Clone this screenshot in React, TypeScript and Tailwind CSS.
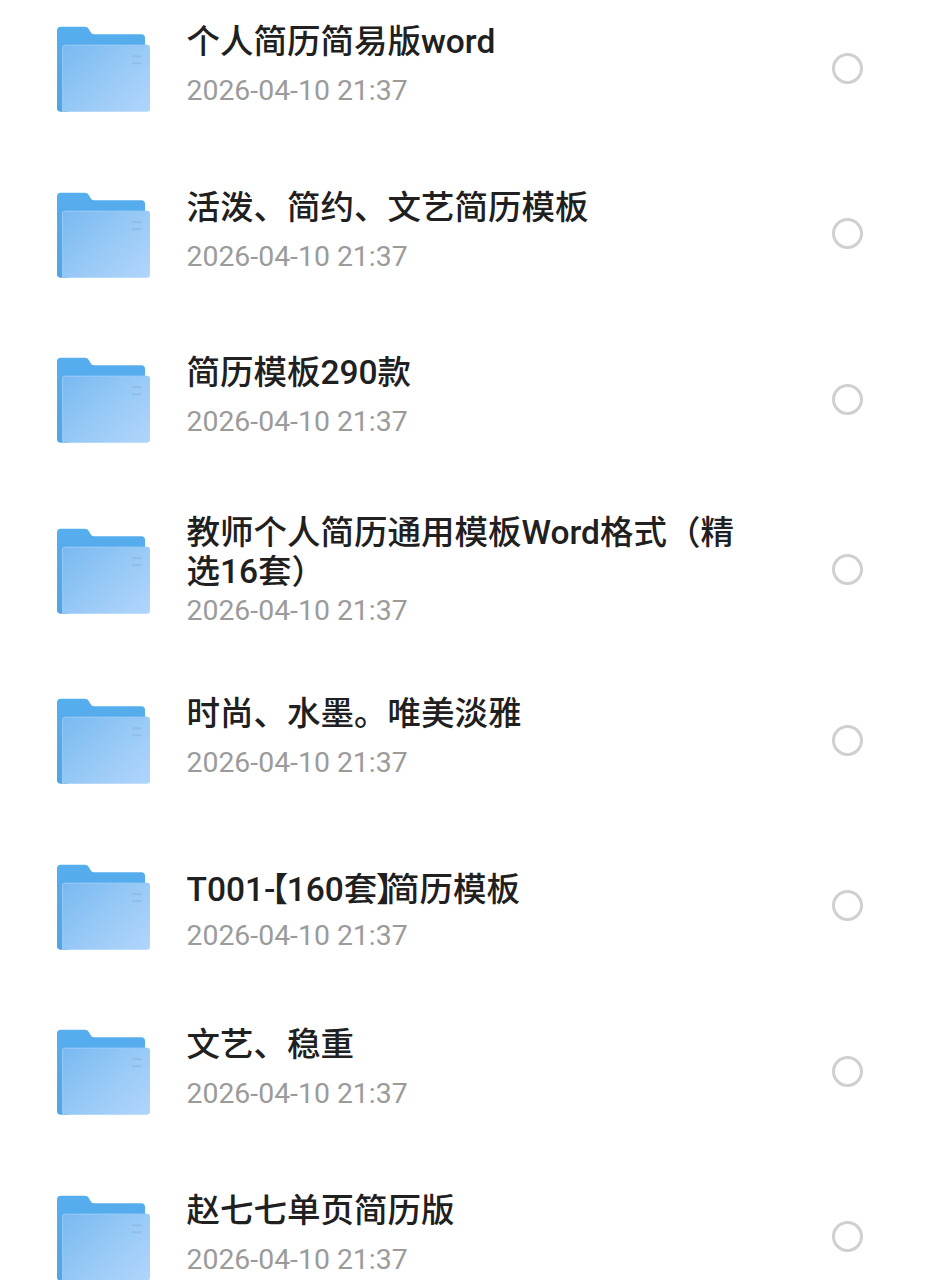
import React, { useState } from "react";
import clsx from "clsx";

type Folder = {
    name: React.ReactNode;
    date: string;
    // rows are a little taller when the name wraps onto a second line
    rowClass: string;
    nameClass: string;
};

const SINGLE = "h-[165.5px] pb-[6px]";
const SINGLE_NAME = "mb-[13px]";

const folders: Folder[] = [
    { name: "个人简历简易版word", date: "2026-04-10 21:37", rowClass: SINGLE, nameClass: SINGLE_NAME },
    { name: "活泼、简约、文艺简历模板", date: "2026-04-10 21:37", rowClass: SINGLE, nameClass: SINGLE_NAME },
    { name: "简历模板290款", date: "2026-04-10 21:37", rowClass: SINGLE, nameClass: SINGLE_NAME },
    {
        name: "教师个人简历通用模板Word格式（精选16套）",
        date: "2026-04-10 21:37",
        rowClass: "h-[175.5px] pt-[2px]",
        nameClass: "mb-[3.5px]",
    },
    { name: "时尚、水墨。唯美淡雅", date: "2026-04-10 21:37", rowClass: SINGLE, nameClass: SINGLE_NAME },
    {
        // half-width brackets, pulled in tight against their neighbours
        name: (
            <>
                T001<span className="tracking-[-4px]">-</span>
                <span className="tracking-[-1.5px]">【</span>
                160<span className="tracking-[-1.5px]">套</span>
                <span className="tracking-[-6.5px]">】</span>
                简历模板
            </>
        ),
        date: "2026-04-10 21:37",
        rowClass: "h-[165.5px] pt-[12px]",
        nameClass: "mb-[10.5px] [font-feature-settings:'halt']",
    },
    { name: "文艺、稳重", date: "2026-04-10 21:37", rowClass: SINGLE, nameClass: SINGLE_NAME },
    { name: "赵七七单页简历版", date: "2026-04-10 21:37", rowClass: SINGLE, nameClass: SINGLE_NAME },
];

const FolderIcon = () => (
    <svg width="94" height="86" viewBox="-0.5 -0.25 94 86" className="block">
        <defs>
            <linearGradient id="folderBack" x1="0" y1="0" x2="0" y2="1">
                <stop offset="0" stopColor="#56aeef" />
                <stop offset="1" stopColor="#53a4e2" />
            </linearGradient>
            <linearGradient id="folderFront" x1="0" y1="0.1" x2="1" y2="0.9">
                <stop offset="0" stopColor="#7bbaf1" />
                <stop offset="0.5" stopColor="#97c9f6" />
                <stop offset="1" stopColor="#afd4fb" />
            </linearGradient>
        </defs>
        <path
            d="M4 0.5H28C30 0.5 31.3 1.2 32.4 3L34.6 6.6C35.3 7.7 36 8 37.5 8H85C87 8 88.5 9.5 88.5 11.5V82H4C2 82 0.5 84 0.5 82V4C0.5 2 2 0.5 4 0.5Z"
            fill="url(#folderBack)"
        />
        <path d="M0.5 78H12V85.5H4C2 85.5 0.5 84 0.5 82Z" fill="#53a4e2" />
        <path
            d="M8 18.5H90.5C92.3 18.5 93.5 19.7 93.5 21.5V82.5C93.5 84.3 92.3 85.5 90.5 85.5H5.5V21C5.5 19.5 6.5 18.5 8 18.5Z"
            fill="url(#folderFront)"
        />
        <path d="M6 85V21.5C6 19.8 6.8 19 8.5 19H90" fill="none" stroke="#96caf6" strokeWidth="1" />
        <path d="M75.5 30H85M75.5 37H85" stroke="#8fbdec" strokeWidth="2" />
    </svg>
);

const FolderRow = ({
    folder,
    checked,
    onToggle,
}: {
    folder: Folder;
    checked: boolean;
    onToggle: () => void;
}) => (
    <li className="flex items-center pl-[56px] pr-[67px]">
        <div className="pt-[2px]">
            <FolderIcon />
        </div>
        <div className={clsx("ml-[36.5px] w-[564px] flex flex-col justify-center", folder.rowClass)}>
            <div
                className={clsx(
                    "text-[33.5px] leading-[39px] font-medium text-[#202020]",
                    folder.nameClass
                )}
            >
                {folder.name}
            </div>
            <div className="text-[28.4px] leading-[34px] text-[#9b9b9b]">{folder.date}</div>
        </div>
        <button
            aria-label="select"
            onClick={onToggle}
            className={clsx(
                "ml-auto size-[31px] rounded-full border-[3px] border-[#d0d0d0]",
                checked && "bg-[#56aeef]"
            )}
        />
    </li>
);

export default function App() {
    const [selected, setSelected] = useState<number[]>([]);

    const toggle = (i: number) =>
        setSelected((prev) => (prev.includes(i) ? prev.filter((n) => n !== i) : [...prev, i]));

    return (
        <div
            lang="zh-CN"
            className="h-[1280px] w-[930px] overflow-hidden bg-white font-[Roboto,'Noto_Sans_CJK_SC',sans-serif]"
        >
            <ul className="-mt-[14.75px]">
                {folders.map((folder, i) => (
                    <FolderRow
                        key={i}
                        folder={folder}
                        checked={selected.includes(i)}
                        onToggle={() => toggle(i)}
                    />
                ))}
            </ul>
        </div>
    );
}
